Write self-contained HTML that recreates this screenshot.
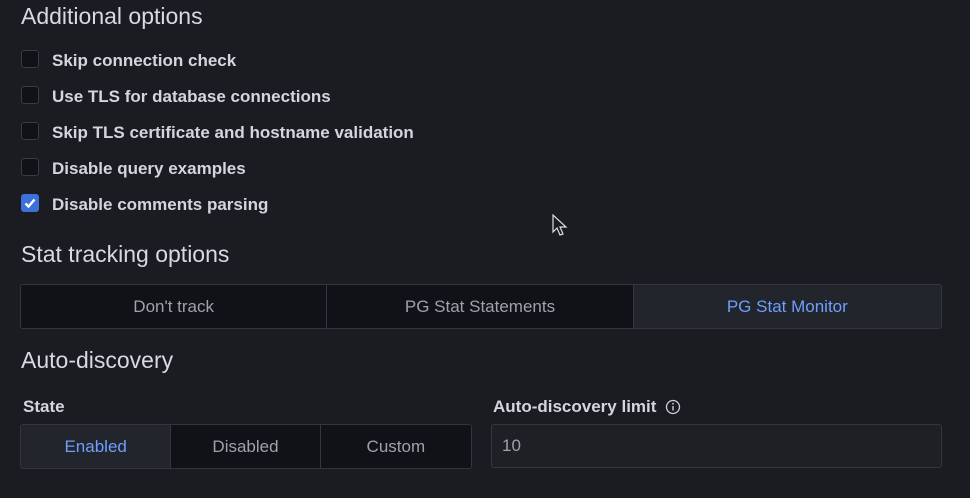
<!DOCTYPE html><html><head><style>
body{margin:0;width:970px;height:498px;background:#1b1c21;font-family:"Liberation Sans",sans-serif;color:#ccccdc;position:relative;overflow:hidden}
.a{position:absolute}
h2{position:absolute;margin:0;font-weight:400;font-size:23px;left:21px;color:#d8d9e3}
.cb{position:absolute;left:21px;width:16px;height:16px;border:1px solid #3a3c44;border-radius:3px;background:#111217}
.lb{position:absolute;left:52px;font-size:17px;font-weight:600;color:#d4d5de}
.grp{position:absolute;display:flex;border:1px solid #34363d;border-radius:3px;overflow:hidden}
.grp div{background:#111217;color:#9fa1ab;font-size:17px;display:flex;align-items:center;justify-content:center;border-right:1px solid #34363d}
.grp div:last-child{border-right:none}
.grp div.on{background:#22252b;color:#6e9fff}
</style></head><body>
<h2 style="top:3px">Additional options</h2>
<div class="cb" style="top:50px"></div><div class="lb" style="top:51px">Skip connection check</div>
<div class="cb" style="top:86px"></div><div class="lb" style="top:87px">Use TLS for database connections</div>
<div class="cb" style="top:122px"></div><div class="lb" style="top:123px">Skip TLS certificate and hostname validation</div>
<div class="cb" style="top:158px"></div><div class="lb" style="top:159px">Disable query examples</div>
<div class="cb" style="top:194px;background:#3d71d9;border-color:#3d71d9"><svg width="16" height="16" viewBox="0 0 16 16"><path d="M3.5 8.5l3 3 6-7" stroke="#fff" stroke-width="2.4" fill="none"/></svg></div><div class="lb" style="top:195px">Disable comments parsing</div>
<svg class="a" style="left:552px;top:214px" width="16" height="24" viewBox="0 0 16 24"><path d="M1 1v17l4-4 3 7 3-1-3-7h6z" fill="#1b1c21" stroke="#ddd" stroke-width="1.2"/></svg>
<h2 style="top:241px">Stat tracking options</h2>
<div class="grp" style="left:20px;top:284px;width:920px;height:43px"><div style="width:306px">Don't track</div><div style="width:306px">PG Stat Statements</div><div class="on" style="width:308px">PG Stat Monitor</div></div>
<h2 style="top:347px">Auto-discovery</h2>
<div class="lb" style="left:23px;top:397px;font-size:17px">State</div>
<div class="grp" style="left:20px;top:424px;width:450px;height:43px"><div class="on" style="width:150px">Enabled</div><div style="width:149px">Disabled</div><div style="width:151px">Custom</div></div>
<div class="lb" style="left:493px;top:397px;font-size:17px">Auto-discovery limit</div>
<svg class="a" style="left:665px;top:399px" width="16" height="16" viewBox="0 0 16 16"><circle cx="8" cy="8" r="6.5" stroke="#ccccdc" stroke-width="1.3" fill="none"/><path d="M8 7v4.5" stroke="#ccccdc" stroke-width="1.4"/><circle cx="8" cy="4.8" r="0.9" fill="#ccccdc"/></svg>
<div class="a" style="left:491px;top:424px;width:451px;height:44px;border:1px solid #34363d;border-radius:3px;background:#1f2026;color:#9fa1ab;font-size:17px;line-height:42px;box-sizing:border-box;padding-left:10px">10</div>
</body></html>
